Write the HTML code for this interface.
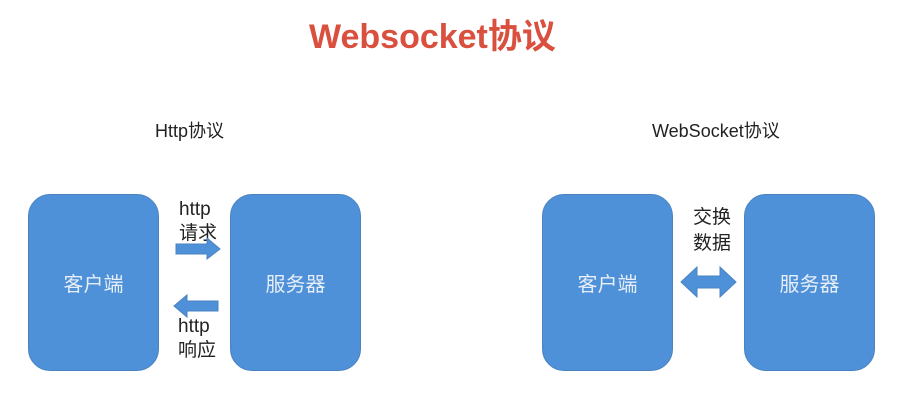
<!DOCTYPE html><html><head><style>
body{margin:0;width:907px;height:406px;background:#fff;position:relative;overflow:hidden;font-family:"Liberation Sans","Noto Sans CJK SC",sans-serif}
.t{position:absolute;white-space:nowrap}
.b{position:absolute;background:#4f91d8;border:1px solid #4a83c0;border-radius:22px;width:129px;height:175px;top:194px;color:#e6eef8;font-size:20px;display:flex;align-items:center;justify-content:center}
</style></head><body>
<div class="t" style="left:309px;top:9px;font-size:34px;font-weight:bold;color:#d9503f">Websocket协议</div>
<div class="t" style="left:155px;top:117px;font-size:18px;color:#222">Http协议</div>
<div class="t" style="left:652px;top:117px;font-size:18px;color:#222">WebSocket协议</div>
<div class="b" style="left:28px">客户端</div>
<div class="b" style="left:230px">服务器</div>
<div class="b" style="left:542px">客户端</div>
<div class="b" style="left:744px">服务器</div>
<div class="t" style="left:179px;top:198px;font-size:19px;line-height:24px;color:#222">http<br>请求</div>
<div class="t" style="left:178px;top:315px;font-size:19px;line-height:24px;color:#222">http<br>响应</div>
<div class="t" style="left:693px;top:205px;font-size:19px;line-height:26px;color:#222">交换<br>数据</div>
<svg width="907" height="406" style="position:absolute;left:0;top:0">
<path d="M176 244H207V238L220 249L207 259V254H176Z" fill="#4f91d8" stroke="#4a83c0"/>
<path d="M218 301H187V295L174 306L187 317V311H218Z" fill="#4f91d8" stroke="#4a83c0"/>
<path d="M681 282L697 267V276H720V267L736 282L720 297V288H697V297Z" fill="#4f91d8" stroke="#4a83c0"/>
</svg>
</body></html>
